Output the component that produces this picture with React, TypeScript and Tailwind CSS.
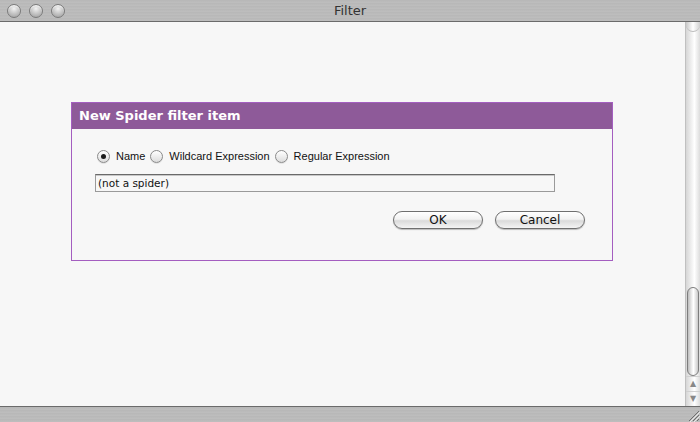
import { useState } from 'react';

const stripes =
  'bg-[repeating-linear-gradient(180deg,#bdbdbd_0px,#b3b3b3_1px,#c2c2c2_2px,#b8b8b8_3px)]';

function Light() {
  return (
    <span className="h-[14px] w-[14px] rounded-full border border-[#7a7a7a] bg-[radial-gradient(circle_at_50%_30%,#f2f2f2_0%,#c9c9c9_45%,#9a9a9a_100%)] shadow-[inset_0_1px_1px_rgba(255,255,255,0.8)]" />
  );
}

function Radio({ checked, label, onClick }: { checked: boolean; label: string; onClick: () => void }) {
  return (
    <button type="button" onClick={onClick} className="flex items-center gap-[6px]">
      <span className="flex h-[13px] w-[13px] items-center justify-center rounded-full border border-[#8a8a8a] bg-[linear-gradient(180deg,#ffffff,#dcdcdc)] shadow-[0_1px_0_rgba(0,0,0,0.08)]">
        {checked && <span className="h-[5px] w-[5px] rounded-full bg-[#1a1a1a]" />}
      </span>
      <span className="font-['Liberation_Sans',sans-serif] text-[11px] text-[#111]">{label}</span>
    </button>
  );
}

function PillButton({ children }: { children: string }) {
  return (
    <button
      type="button"
      className="flex h-[18px] w-[90px] items-center justify-center rounded-full border border-[#6f6f6f] bg-[linear-gradient(180deg,#ffffff_0%,#f2f2f2_45%,#dadada_55%,#f4f4f4_100%)] text-[12px] text-[#111] shadow-[0_1px_1px_rgba(0,0,0,0.25)]"
    >
      {children}
    </button>
  );
}

export default function App() {
  const [mode, setMode] = useState('name');

  return (
    <div className="flex h-[422px] w-[700px] flex-col overflow-hidden bg-[#f7f7f7] font-['DejaVu_Sans',sans-serif]">
      {/* title bar */}
      <div className={`relative flex h-[22px] shrink-0 items-center border-b border-[#6b6b6b] ${stripes}`}>
        <div className="flex gap-[8px] pl-[7px]">
          <Light />
          <Light />
          <Light />
        </div>
        <div className="absolute inset-x-0 text-center text-[13px] text-[#333]">Filter</div>
      </div>

      <div className="flex flex-1">
        {/* content */}
        <div className="flex-1 pl-[71px] pr-[72px] pt-[80px]">
          <div className="border border-[#a45ec0] bg-[#f7f7f7]">
            <div className="flex h-[26px] items-center bg-[#8e5a99] pl-[7px] text-[13px] font-bold text-white">
              New Spider filter item
            </div>
            <div className="pb-[31px] pl-[25px] pr-[27px] pt-[19px]">
              <div className="flex items-center gap-[5px]">
                <Radio checked={mode === 'name'} label="Name" onClick={() => setMode('name')} />
                <Radio checked={mode === 'wild'} label="Wildcard Expression" onClick={() => setMode('wild')} />
                <Radio checked={mode === 'regex'} label="Regular Expression" onClick={() => setMode('regex')} />
              </div>
              <input
                defaultValue="(not a spider)"
                className="-ml-[2px] mt-[9px] block h-[18px] w-[460px] border border-[#9a9a9a] border-t-[#6a6a6a] bg-[#f7f7f7] px-[2px] text-[10.5px] text-[#111] outline-none shadow-[inset_0_1px_0_#c8c8c8]"
              />
              <div className="mt-[19px] flex justify-end gap-[12px]">
                <PillButton>OK</PillButton>
                <PillButton>Cancel</PillButton>
              </div>
            </div>
          </div>
        </div>

        {/* scrollbar */}
        <div className="flex w-[15px] shrink-0 flex-col border-l border-[#c0c0c0] bg-[linear-gradient(90deg,#d6d6d6,#f4f4f4_45%,#ffffff_60%,#dcdcdc)]">
          <div className="h-[10px] rounded-b-full border-b border-[#bdbdbd] bg-[linear-gradient(90deg,#c8c8c8,#ffffff,#d0d0d0)]" />
          <div className="flex-1" />
          <div className="mx-[1px] h-[89px] rounded-full border border-[#7d7d7d] bg-[linear-gradient(90deg,#bdbdbd,#f0f0f0_40%,#ffffff_55%,#c9c9c9)]" />
          <div className="flex h-[15px] items-center justify-center border-t border-[#d0d0d0] text-[8px] text-[#888]">▲</div>
          <div className="flex h-[15px] items-center justify-center border-t border-[#d0d0d0] text-[8px] text-[#888]">▼</div>
        </div>
      </div>

      {/* bottom bar */}
      <div className={`relative h-[16px] shrink-0 border-t border-[#6b6b6b] ${stripes}`}>
        <svg className="absolute bottom-0 right-0" width="14" height="14" viewBox="0 0 14 14">
          <path d="M13 3 L3 13 M13 7 L7 13 M13 11 L11 13" stroke="#6e6e6e" strokeWidth="1" />
          <path d="M14 4 L4 14 M14 8 L8 14" stroke="#e8e8e8" strokeWidth="1" />
        </svg>
      </div>
    </div>
  );
}
